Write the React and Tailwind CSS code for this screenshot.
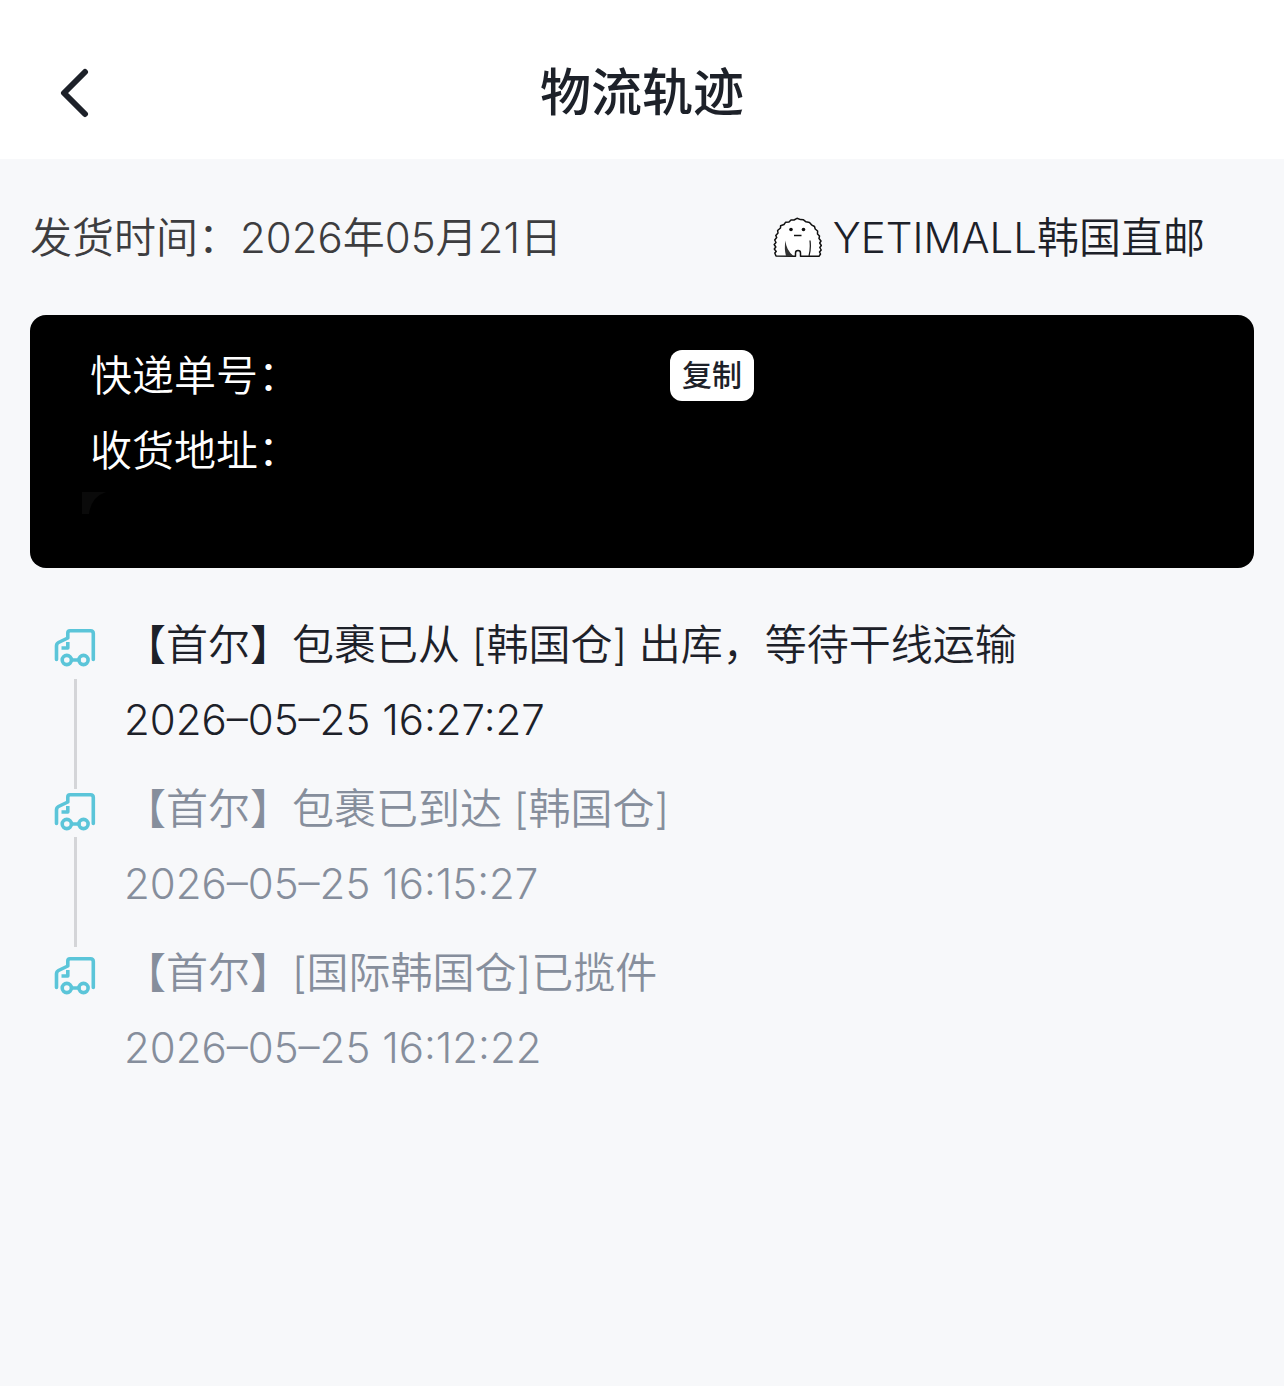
/**
 * Logistics tracking page
 * Header, shipment summary, parcel card and the event timeline.
 */

const EVENTS = [
  { text: "【首尔】包裹已从 [韩国仓] 出库，等待干线运输", time: "2026–05–25 16:27:27" },
  { text: "【首尔】包裹已到达 [韩国仓]", time: "2026–05–25 16:15:27" },
  { text: "【首尔】[国际韩国仓]已揽件", time: "2026–05–25 16:12:22" },
];

function BackIcon() {
  return (
    <svg width="32" height="52" viewBox="0 0 32 52" fill="none" aria-hidden="true">
      <path
        d="M28 5 L7 26 L28 47"
        stroke="#1d2129"
        strokeWidth="6"
        strokeLinecap="round"
        strokeLinejoin="round"
      />
    </svg>
  );
}

function YetiLogo() {
  return (
    <svg className="shrink-0" width="50" height="42" viewBox="0 0 50 42" fill="none" aria-hidden="true">
      <path
        d="M3 39 L1.800 36 L3.200 34.500 L1.300 32 L2.800 30 L1.200 27.500 L3 25.500 L1.700 23 L3.700 20.500 L2.800 18.500 L5 16 L4.600 13.500 L7.500 11 L7.600 8.800 L11 7.500 L12.500 5.300 L16 5 L18 3 L21 3 L24 1.300 L27.500 2.600 L30.500 2.800 L33 4.800 L36.500 5.400 L38.500 7.800 L41.500 9.500 L42.200 12 L44.600 14 L44.500 17 L46.500 19 L46 21.500 L48 24 L46.700 26 L48.300 28.500 L46.800 30.500 L48.200 33 L46.500 35 L47.500 37 L46 39.300 H27.500 V36 Q27.500 33.500 25 33.500 Q22.500 33.500 22.500 36 V39.300 Z"
        fill="#fff"
        stroke="#111"
        strokeWidth="1.500"
        strokeLinejoin="round"
      />
      <path d="M12.500 23.500 Q13 33 20.500 39 H13 Q11 32 12.500 23.500 Z" fill="#333" />
      <path d="M37 23.500 Q38 32 36 39" stroke="#111" strokeWidth="1.200" />
      <circle cx="18" cy="12.500" r="1.800" fill="#111" />
      <circle cx="30.500" cy="12.500" r="1.800" fill="#111" />
      <path d="M21 18.500 H28.500" stroke="#111" strokeWidth="1.500" />
    </svg>
  );
}

function TruckIcon() {
  return (
    <svg width="42" height="40" viewBox="0 0 42 40" fill="none" aria-hidden="true">
      <g stroke="#5bc5d9" strokeWidth="3.600" strokeLinecap="round" strokeLinejoin="round">
        <path d="M2.500 31.500 V18 Q2.500 15.500 4.500 14.500 L13.800 10 V5 Q13.800 2.800 16 2.800 H36.500 Q39.300 2.800 39.300 5.500 V31.500" />
        <path d="M13.800 14 V20 H7.500" strokeLinecap="butt" />
        <circle cx="12.800" cy="32" r="4.600" />
        <circle cx="29.500" cy="32" r="4.600" />
        <path d="M18 32 H25" />
      </g>
    </svg>
  );
}

function TimelineItem({ event, first, last }) {
  return (
    <li className={`flex ${first ? "text-[#1d2129]" : "text-[#868e9c]"}`}>
      {/* Icon with the connector under it */}
      <div className="flex w-[90px] shrink-0 flex-col items-center pt-[21px]">
        <TruckIcon />
        {!last && (
          <span
            className={`-mb-5 h-[110px] w-[3px] shrink-0 bg-[#d4d5d8] ${first ? "mt-[11px]" : "mt-[5px]"}`}
          />
        )}
      </div>
      <div className="ml-1 min-w-0 flex-1 pb-[14px]">
        <p>{event.text}</p>
        <time className="block">{event.time}</time>
      </div>
    </li>
  );
}

export default function App() {
  return (
    <div
      lang="zh-CN"
      className="min-h-screen bg-[#f7f8fa] font-[Inter,'Noto_Sans_CJK_SC',sans-serif] text-[42px] leading-[75px] font-[350] text-[#1d2129]"
    >
      {/* Header */}
      <header className="grid grid-cols-[120px_1fr_120px] items-center bg-white pt-[43px] pb-4">
        <button type="button" aria-label="返回" className="ml-[57px] w-8">
          <BackIcon />
        </button>
        <h1 className="text-center text-[51px] leading-[100px] font-medium">物流轨迹</h1>
      </header>

      <main className="px-[30px] pt-[41px]">
        {/* Shipment summary */}
        <div className="flex items-center justify-between pr-[49px]">
          <p className="text-[#3d3d3f]">发货时间：2026年05月21日</p>
          <div className="flex items-center gap-[10px]">
            <YetiLogo />
            <span>YETIMALL韩国直邮</span>
          </div>
        </div>

        {/* Parcel card */}
        <section className="mt-10 rounded-2xl bg-black px-[60px] pt-[23px] pb-[5px] text-white">
          <div className="flex items-center">
            <span>快递单号：</span>
            <span className="w-[370px]" />
            <button
              type="button"
              className="rounded-xl bg-white px-3 text-[30px] leading-[51px] font-medium text-[#1d2129]"
            >
              复制
            </button>
          </div>
          <p>收货地址：</p>
          <div className="-ml-2 h-[75px] pt-1">
            <svg width="24" height="22" viewBox="0 0 24 22" aria-hidden="true">
              <path d="M0 0 H24 Q9 5 7 22 H0 Z" fill="#0a0a0a" />
            </svg>
          </div>
        </section>

        {/* Timeline */}
        <ol className="mt-[39px]">
          {EVENTS.map((event, i) => (
            <TimelineItem
              key={event.time}
              event={event}
              first={i === 0}
              last={i === EVENTS.length - 1}
            />
          ))}
        </ol>
      </main>
    </div>
  );
}
